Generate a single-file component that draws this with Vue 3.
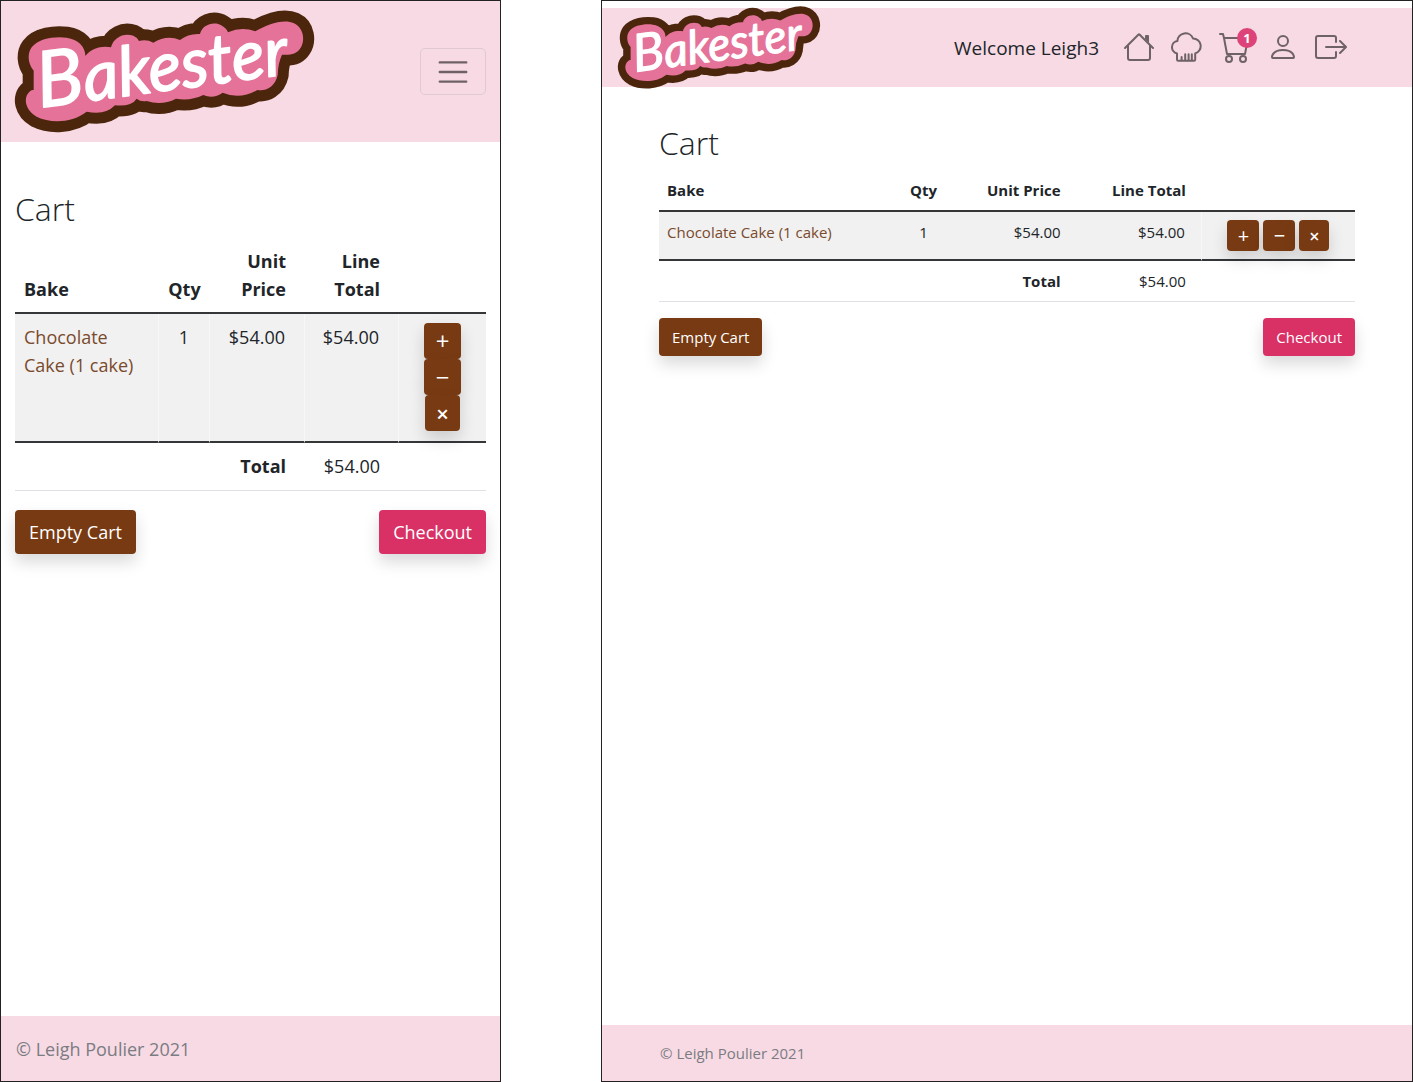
<script setup>
const icons = [
  {
    name: 'Home',
    paths: [
      'M2 13.5V7h1v6.5a.5.5 0 0 0 .5.5h9a.5.5 0 0 0 .5-.5V7h1v6.5a1.5 1.5 0 0 1-1.5 1.5h-9A1.5 1.5 0 0 1 2 13.5zm11-11V6l-2-2V2.5a.5.5 0 0 1 .5-.5h1a.5.5 0 0 1 .5.5z',
      'M7.293 1.5a1 1 0 0 1 1.414 0l6.647 6.646a.5.5 0 0 1-.708.708L8 2.207 1.354 8.854a.5.5 0 1 1-.708-.708L7.293 1.5z',
    ],
  },
  {
    name: 'Bakes',
    stroke: true,
    paths: [
      'M3 11.2A3.15 3.15 0 0 1 3.2 5A4.05 4.05 0 0 1 11 3.7A3.83 3.83 0 0 1 12.1 11.2V14.3A.6.6 0 0 1 11.5 14.9H3.6A.6.6 0 0 1 3 14.3Z',
      'M5.3 14.6v-1.6M7.1 14.6v-3M8.8 14.6v-3M10.4 14.6v-3',
    ],
  },
  {
    name: 'Cart',
    badge: 1,
    paths: [
      'M0 1.5A.5.5 0 0 1 .5 1H2a.5.5 0 0 1 .485.379L2.89 3H14.5a.5.5 0 0 1 .491.592l-1.5 8A.5.5 0 0 1 13 12H4a.5.5 0 0 1-.491-.408L2.01 3.607 1.61 2H.5a.5.5 0 0 1-.5-.5zM3.102 4l1.313 7h8.17l1.313-7H3.102zM5 12a2 2 0 1 0 0 4 2 2 0 0 0 0-4zm7 0a2 2 0 1 0 0 4 2 2 0 0 0 0-4zm-7 1a1 1 0 1 1 0 2 1 1 0 0 1 0-2zm7 0a1 1 0 1 1 0 2 1 1 0 0 1 0-2z',
    ],
  },
  {
    name: 'Account',
    paths: [
      'M8 8a3 3 0 1 0 0-6 3 3 0 0 0 0 6zm2-3a2 2 0 1 1-4 0 2 2 0 0 1 4 0zm4 8c0 1-1 1-1 1H3s-1 0-1-1 1-4 6-4 6 3 6 4zm-1-.004c-.001-.246-.154-.986-.832-1.664C11.516 10.68 10.289 10 8 10c-2.29 0-3.516.68-4.168 1.332-.678.678-.83 1.418-.832 1.664h10z',
    ],
  },
  {
    name: 'Log out',
    paths: [
      'M10 12.5a.5.5 0 0 1-.5.5h-8a.5.5 0 0 1-.5-.5v-9a.5.5 0 0 1 .5-.5h8a.5.5 0 0 1 .5.5v2a.5.5 0 0 0 1 0v-2A1.5 1.5 0 0 0 9.5 2h-8A1.5 1.5 0 0 0 0 3.5v9A1.5 1.5 0 0 0 1.5 14h8a1.5 1.5 0 0 0 1.5-1.5v-2a.5.5 0 0 0-1 0v2z',
      'M15.854 8.354a.5.5 0 0 0 0-.708l-3-3a.5.5 0 0 0-.708.708L14.293 7.5H5.5a.5.5 0 0 0 0 1h8.793l-2.147 2.146a.5.5 0 0 0 .708.708l3-3z',
    ],
  },
]
const views = ['phone', 'tablet']
const logoShape =
  'M101 270V212C82 190 82 160 95 142C115 115 165 108 200 113C235 118 257 142 256 168C275 144 305 137 333 142C340 112 372 97 400 107Q412 112 417 123Q440 117 460 128Q500 104 540 120Q565 100 600 102C606 76 640 62 666 77Q680 85 684 97Q725 78 766 94C800 75 850 55 882 70C912 84 916 122 901 145C889 164 868 166 846 164Q834 190 833 225C825 262 795 275 772 270Q720 300 668 278Q640 298 610 285Q570 304 528 296Q485 318 440 303Q422 306 410 296Q395 320 345 316Q315 347 260 335C215 370 150 370 110 350C75 330 68 292 90 274Q96 269 101 270Z'
</script>

<template>
  <div class="board">
    <section v-for="view in views" :key="view" class="frame" :class="view">
      <header class="topbar">
        <a href="#" class="brand" aria-label="Bakester">
          <svg class="logo" viewBox="45 30 897 368">
            <path :d="logoShape" fill="#e57399" stroke="#4b260c" stroke-width="66" stroke-linejoin="round" />
            <path :d="logoShape" fill="#e57399" />
            <text transform="translate(120 323) rotate(-7.7)" class="wordmark"><tspan class="initial">B</tspan>akester</text>
          </svg>
        </a>
        <button v-if="view === 'phone'" class="toggler" type="button" aria-label="Menu">
          <svg viewBox="0 0 30 30" width="36" height="36">
            <path d="M4 7h22M4 15h22M4 23h22" fill="none" stroke="currentColor" stroke-width="2" stroke-linecap="round" />
          </svg>
        </button>
        <nav v-else class="menu">
          <span class="welcome">Welcome Leigh3</span>
          <a v-for="icon in icons" :key="icon.name" href="#" class="icon" :aria-label="icon.name">
            <svg viewBox="0 0 16 16" width="32" height="32" :class="{ line: icon.stroke }">
              <path v-for="d in icon.paths" :key="d" :d="d" />
            </svg>
            <span v-if="icon.badge" class="badge">{{ icon.badge }}</span>
          </a>
        </nav>
      </header>

      <main class="content">
        <h1>Cart</h1>
        <table>
          <colgroup>
            <col class="c-bake" /><col class="c-qty" /><col class="c-unit" /><col class="c-line" /><col />
          </colgroup>
          <thead>
            <tr>
              <th>Bake</th>
              <th class="mid">Qty</th>
              <th class="num">Unit Price</th>
              <th class="num">Line Total</th>
              <td></td>
            </tr>
          </thead>
          <tbody>
            <tr>
              <td><a href="#" class="bake">Chocolate Cake (1 cake)</a></td>
              <td class="mid">1</td>
              <td class="num">$54.00</td>
              <td class="num">$54.00</td>
              <td class="tools">
                <div class="steps">
                  <button type="button" class="btn step" aria-label="Add one">+</button>
                  <button type="button" class="btn step" aria-label="Remove one">−</button>
                  <button type="button" class="btn step remove" aria-label="Remove bake">×</button>
                </div>
              </td>
            </tr>
          </tbody>
          <tfoot>
            <tr>
              <td></td>
              <td></td>
              <th class="num">Total</th>
              <td class="num">$54.00</td>
              <td></td>
            </tr>
          </tfoot>
        </table>
        <div class="actions">
          <button type="button" class="btn">Empty Cart</button>
          <button type="button" class="btn primary">Checkout</button>
        </div>
      </main>

      <footer>© Leigh Poulier 2021</footer>
    </section>
  </div>
</template>

<style>
body {
  margin: 0;
  background: #fff;
}
</style>

<style scoped>
.board {
  display: grid;
  grid-template-columns: 501fr 812fr;
  column-gap: 100px;
  min-height: 100vh;
  font-family: 'Open Sans', 'Noto Sans', sans-serif;
  color: #212529;
}
.frame {
  --pad: 8px;
  --end: 16px;
  --line: 24px;
  box-sizing: border-box;
  display: flex;
  flex-direction: column;
  min-width: 0;
  border: 1px solid #222;
  font-size: 15px;
  line-height: var(--line);
}
.phone {
  --pad: 9px;
  --end: 19px;
  --line: 28px;
  font-size: 18px;
}
.topbar {
  display: flex;
  align-items: center;
  justify-content: space-between;
  background: #f7dae4;
}
.phone .topbar {
  height: 141px;
  padding: 0 14px;
}
.tablet .topbar {
  height: 79px;
  margin-top: 7px;
  padding: 0 65px 0 16px;
}
.brand {
  display: block;
}
.logo {
  display: block;
  overflow: visible;
  width: 299px;
}
.tablet .logo {
  width: 202px;
}
.wordmark {
  font-family: Lato, sans-serif;
  font-style: italic;
  font-size: 206px;
  fill: #fff;
  stroke: #fff;
  stroke-width: 5px;
  stroke-linejoin: round;
}
.initial {
  font-size: 232px;
}
.toggler {
  display: flex;
  align-items: center;
  justify-content: center;
  width: 66px;
  height: 47px;
  padding: 0;
  border: 1px solid #e0c9d1;
  border-radius: 5px;
  background: none;
  color: #6f6267;
}
.menu {
  display: flex;
  align-items: center;
  gap: 16px;
}
.welcome {
  margin-right: 8px;
  font-size: 19px;
}
.icon {
  position: relative;
  display: block;
  height: 33px;
  color: #6f6267;
}
.icon svg {
  display: block;
  fill: currentColor;
}
.icon svg.line {
  fill: none;
  stroke: currentColor;
  stroke-linecap: round;
  stroke-linejoin: round;
}
.badge {
  position: absolute;
  top: -3px;
  left: 18px;
  width: 20px;
  height: 20px;
  border-radius: 50%;
  background: #dd4379;
  color: #fff;
  font-size: 13px;
  font-weight: 700;
  line-height: 20px;
  text-align: center;
}
.content {
  flex: 1;
  padding: 0 57px;
}
.phone .content {
  padding: 0 14px;
}
h1 {
  margin: 36px 0 7px;
  font-size: 32px;
  font-weight: 300;
  line-height: 40px;
}
.phone h1 {
  margin: 47px 0 9px;
}
table {
  width: 100%;
  table-layout: fixed;
  border-collapse: separate;
  border-spacing: 0;
}
.c-bake { width: 34%; }
.c-qty { width: 8%; }
.c-unit { width: 18%; }
.c-line { width: 18%; }
.phone .c-bake { width: 144px; }
.phone .c-qty { width: 51px; }
.phone .c-unit { width: 95px; }
.phone .c-line { width: 94px; }
th,
td {
  padding: var(--pad);
  text-align: left;
  vertical-align: top;
}
th {
  font-weight: 700;
}
td {
  font-weight: 400;
}
thead th {
  vertical-align: bottom;
}
thead th,
thead td,
tbody td {
  border-bottom: 2px solid #343638;
}
tbody td {
  background: #f1f1f1;
}
.phone tbody td:not(:last-child),
.tablet tbody td:nth-child(4) {
  border-right: 1px solid #f7f7f7;
}
tfoot th,
tfoot td {
  border-bottom: 1px solid #dee2e6;
}
.phone tbody td,
.phone tfoot th,
.phone tfoot td {
  padding-bottom: 10px;
}
.mid {
  text-align: center;
}
th.num,
td.num {
  padding-right: var(--end);
  text-align: right;
}
.bake {
  color: #7a4a2c;
  text-decoration: none;
}
.btn {
  height: 38px;
  padding: 0 13px;
  border: 0;
  border-radius: 4px;
  background: #783a12;
  box-shadow: 0 8px 16px rgba(0, 0, 0, 0.15);
  color: #fff;
  font: inherit;
}
.phone .btn {
  height: 44px;
  padding: 0 14px;
}
.btn.primary {
  background: #d93066;
}
.steps {
  display: flex;
  justify-content: center;
  gap: 4px;
}
.btn.step {
  width: 32px;
  height: 31px;
  padding: 0;
  font-size: 20px;
  font-weight: 500;
}
.btn.step.remove {
  width: 30px;
  font-size: 18px;
  font-weight: 600;
}
.phone .steps {
  flex-direction: column;
  align-items: center;
  gap: 0;
}
.phone .btn.step {
  width: 37px;
  height: 36px;
  padding: 0;
  font-size: 24px;
}
.phone .btn.step.remove {
  width: 35px;
  font-size: 22px;
}
.actions {
  display: flex;
  justify-content: space-between;
  margin-top: 16px;
}
.phone .actions {
  margin-top: 19px;
}
footer {
  padding: 16px 58px;
  background: #f7dae4;
  color: #7b7c82;
}
.phone footer {
  padding: 19px 15px 18px;
}
</style>
